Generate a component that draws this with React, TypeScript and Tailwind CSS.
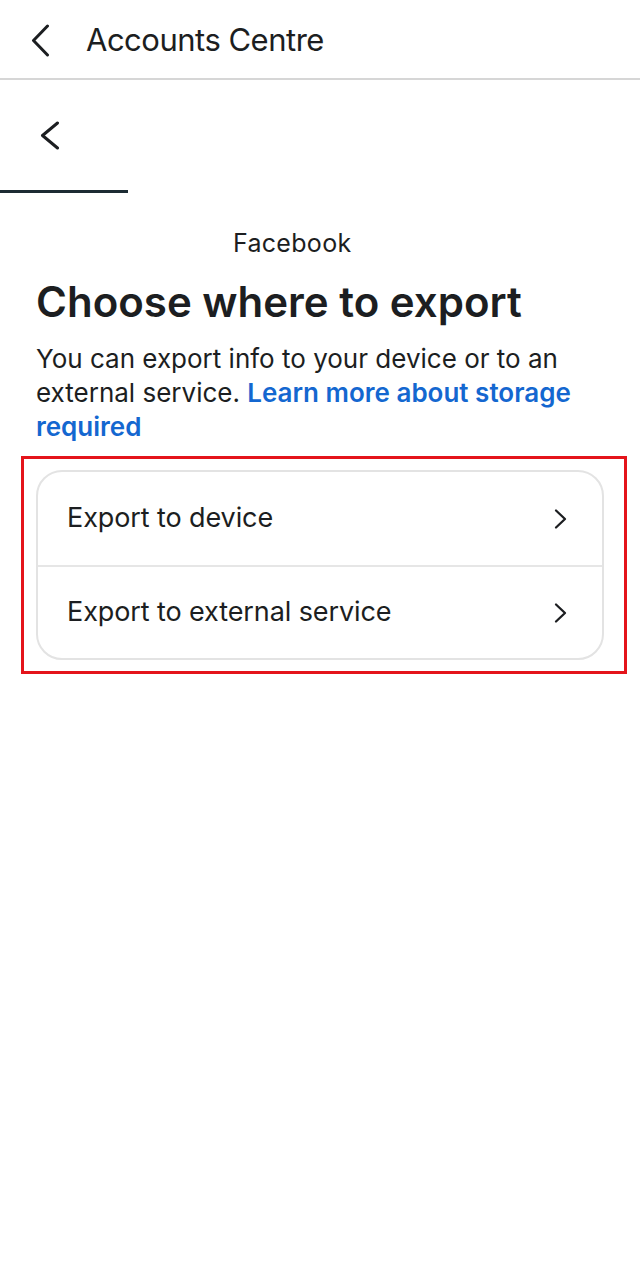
const options = ["Export to device", "Export to external service"];

const BackChevron = ({ w, h, stroke }: { w: number; h: number; stroke: number }) => (
  <svg width={w} height={h} viewBox={`0 0 ${w} ${h}`} fill="none">
    <path
      d={`M${w - stroke / 2 - 1} ${stroke / 2 + 0.5} L${stroke / 2 + 1} ${h / 2} L${w - stroke / 2 - 1} ${h - stroke / 2 - 0.5}`}
      stroke="#1c1e21"
      strokeWidth={stroke}
      strokeLinecap="round"
      strokeLinejoin="round"
    />
  </svg>
);

const RowChevron = () => (
  <svg width="16" height="22" viewBox="0 0 16 22" fill="none">
    <path d="M4 2.5 L13 11 L4 19.5" stroke="#1c1e21" strokeWidth="2.3" strokeLinecap="round" strokeLinejoin="round" />
  </svg>
);

const App = () => {
  return (
    <div className="w-[640px] min-h-[1280px] bg-white text-[#1c1e21] font-['Inter',sans-serif]">
      {/* top bar */}
      <header className="h-[80px] flex items-center border-b-2 border-[#d6d6d6]">
        <div className="ml-[31px] pt-[2px]">
          <BackChevron w={19} h={33} stroke={3} />
        </div>
        <h1 className="ml-[36px] text-[31px] leading-[40px] font-normal tracking-[-0.5px] pt-[2px]">
          Accounts Centre
        </h1>
      </header>

      {/* secondary back tab */}
      <div className="w-[128px] h-[113px] flex items-center border-b-[3px] border-[#1c2b33]">
        <div className="ml-[40px]">
          <BackChevron w={20} h={29} stroke={3} />
        </div>
      </div>

      <main className="px-9">
        <p className="mt-[35px] pl-[197px] text-[25px] leading-[30px] tracking-[0.3px]">Facebook</p>
        <h2 className="mt-[20px] text-[42px] leading-[48px] font-semibold tracking-normal">
          Choose where to export
        </h2>
        <p className="mt-[16px] text-[26px] leading-[34px] tracking-normal">
          You can export info to your device or to an external service.{" "}
          <span className="font-semibold text-[#1467d0]">Learn more about storage required</span>
        </p>
      </main>

      <div className="ml-[21px] mt-[12px] w-[606px] border-[3px] border-[#e4141b] pl-[12px] pr-[20px] py-[11px]">
        <div className="rounded-[26px] border-2 border-[#e3e3e3] overflow-hidden">
          {options.map((label, i) => (
            <div
              key={label}
              className={
                "h-[93px] flex items-center justify-between pl-[29px] pr-[34px] " +
                (i > 0 ? "border-t-2 border-[#e6e6e6]" : "")
              }
            >
              <span className="text-[27px] tracking-[-0.1px]">{label}</span>
              <RowChevron />
            </div>
          ))}
        </div>
      </div>
    </div>
  );
};

export default App;
